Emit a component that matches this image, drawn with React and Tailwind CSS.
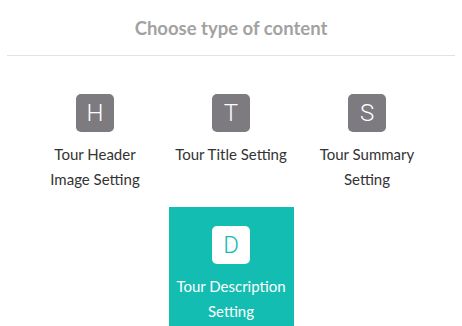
import React, { useState } from 'react';

const items = [
  { letter: 'H', label: 'Tour Header Image Setting' },
  { letter: 'T', label: 'Tour Title Setting' },
  { letter: 'S', label: 'Tour Summary Setting' },
  { letter: 'D', label: 'Tour Description Setting' },
];

function App() {
  const [selected, setSelected] = useState('D');

  return (
    <div className="w-[462px] h-[326px] overflow-hidden bg-white" style={{ fontFamily: 'Lato, "Open Sans", sans-serif' }}>
      <div className="h-[56px] mx-[7px] border-b border-[#e2e2e2] flex items-center justify-center">
        <h2 className="text-[18.5px] font-bold text-[#a2a2a2] pt-[2px]">Choose type of content</h2>
      </div>

      <div className="flex flex-wrap justify-center px-[26px] pt-[19px] gap-y-[7px]">
        {items.map((item) => {
          const active = selected === item.letter;
          return (
            <button
              key={item.letter}
              type="button"
              onClick={() => setSelected(item.letter)}
              className={`w-[125px] h-[125px] mx-[5.5px] flex flex-col items-center pt-[19px] ${
                active ? 'bg-[#14bdb1] text-white' : 'bg-white text-[#333333]'
              }`}
            >
              <span
                className={`w-[38px] h-[38px] rounded-[5px] flex items-center justify-center text-[24px] font-light ${
                  active ? 'bg-white text-[#14bdb1]' : 'bg-[#7d7a80] text-white'
                }`}
                style={{ fontFamily: 'Roboto, "DejaVu Sans", sans-serif' }}
              >
                {item.letter}
              </span>
              <span className="mt-[10px] text-[15px] leading-[25px] text-center px-[4px]">
                {item.label}
              </span>
            </button>
          );
        })}
      </div>
    </div>
  );
}

export default App;
